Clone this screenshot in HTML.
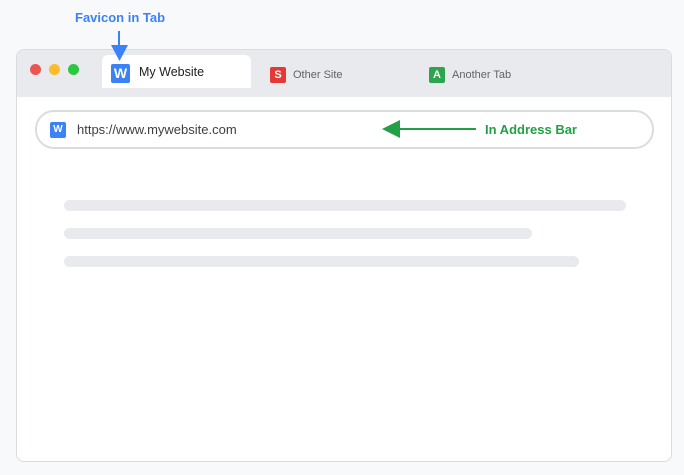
<!DOCTYPE html>
<html><head><style>
body{margin:0;width:684px;height:475px;background:#f8f9fa;font-family:"Liberation Sans",sans-serif;position:relative;overflow:hidden}
.a{position:absolute}
.win{left:16px;top:49px;width:654px;height:411px;border:1px solid #dadce0;border-radius:8px;background:#fff;overflow:hidden}
.bar{left:0;top:0;width:654px;height:47px;background:#e8eaed}
.dot{width:11px;height:11px;border-radius:50%;top:14px}
.fav{color:#fff;font-weight:bold;text-align:center;border-radius:2px}
.line{height:11px;border-radius:6px;background:#e8eaed}
</style></head><body>
<div class="a" style="left:75px;top:10px;font-size:13px;font-weight:bold;color:#3b82f6">Favicon in Tab</div>
<div class="win a">
 <div class="bar a"></div>
 <div class="a dot" style="left:13px;background:#ef5350"></div>
 <div class="a dot" style="left:32px;background:#fbbc2e"></div>
 <div class="a dot" style="left:51px;background:#28c840"></div>
 <div class="a" style="left:85px;top:5px;width:149px;height:33px;background:#fff;border-radius:6px 6px 0 0"></div>
 <div class="a fav" style="left:94px;top:14px;width:19px;height:19px;line-height:19px;font-size:14px;background:#3b82f6">W</div>
 <div class="a" style="left:122px;top:15px;font-size:12.5px;color:#202124">My Website</div>
 <div class="a fav" style="left:253px;top:17px;width:16px;height:16px;line-height:16px;font-size:11px;background:#e53935">S</div>
 <div class="a" style="left:276px;top:19px;font-size:11px;color:#5f6368">Other Site</div>
 <div class="a fav" style="left:412px;top:17px;width:16px;height:16px;line-height:16px;font-size:11px;background:#2ea44f">A</div>
 <div class="a" style="left:435px;top:19px;font-size:11px;color:#5f6368">Another Tab</div>
 <div class="a" style="left:18px;top:60px;width:615px;height:35px;border:2px solid #dadce0;border-radius:19px"></div>
 <div class="a fav" style="left:33px;top:72px;width:16px;height:16px;line-height:16px;font-size:10px;background:#3b82f6">W</div>
 <div class="a" style="left:60px;top:72px;font-size:13px;color:#3c4043">https://www.mywebsite.com</div>
 <div class="a" style="left:468px;top:72px;font-size:13px;font-weight:bold;color:#22a045">In Address Bar</div>
 <div class="a line" style="left:47px;top:150px;width:562px"></div>
 <div class="a line" style="left:47px;top:178px;width:468px"></div>
 <div class="a line" style="left:47px;top:206px;width:515px"></div>
</div>
<svg class="a" style="left:0;top:0" width="684" height="475">
 <line x1="119" y1="31" x2="119" y2="48" stroke="#3b82f6" stroke-width="2"/>
 <polygon points="111,45 128,45 119.5,61" fill="#3b82f6"/>
 <line x1="396" y1="129" x2="476" y2="129" stroke="#22a045" stroke-width="2"/>
 <polygon points="382,129 400,120 400,138" fill="#22a045"/>
</svg>
</body></html>
